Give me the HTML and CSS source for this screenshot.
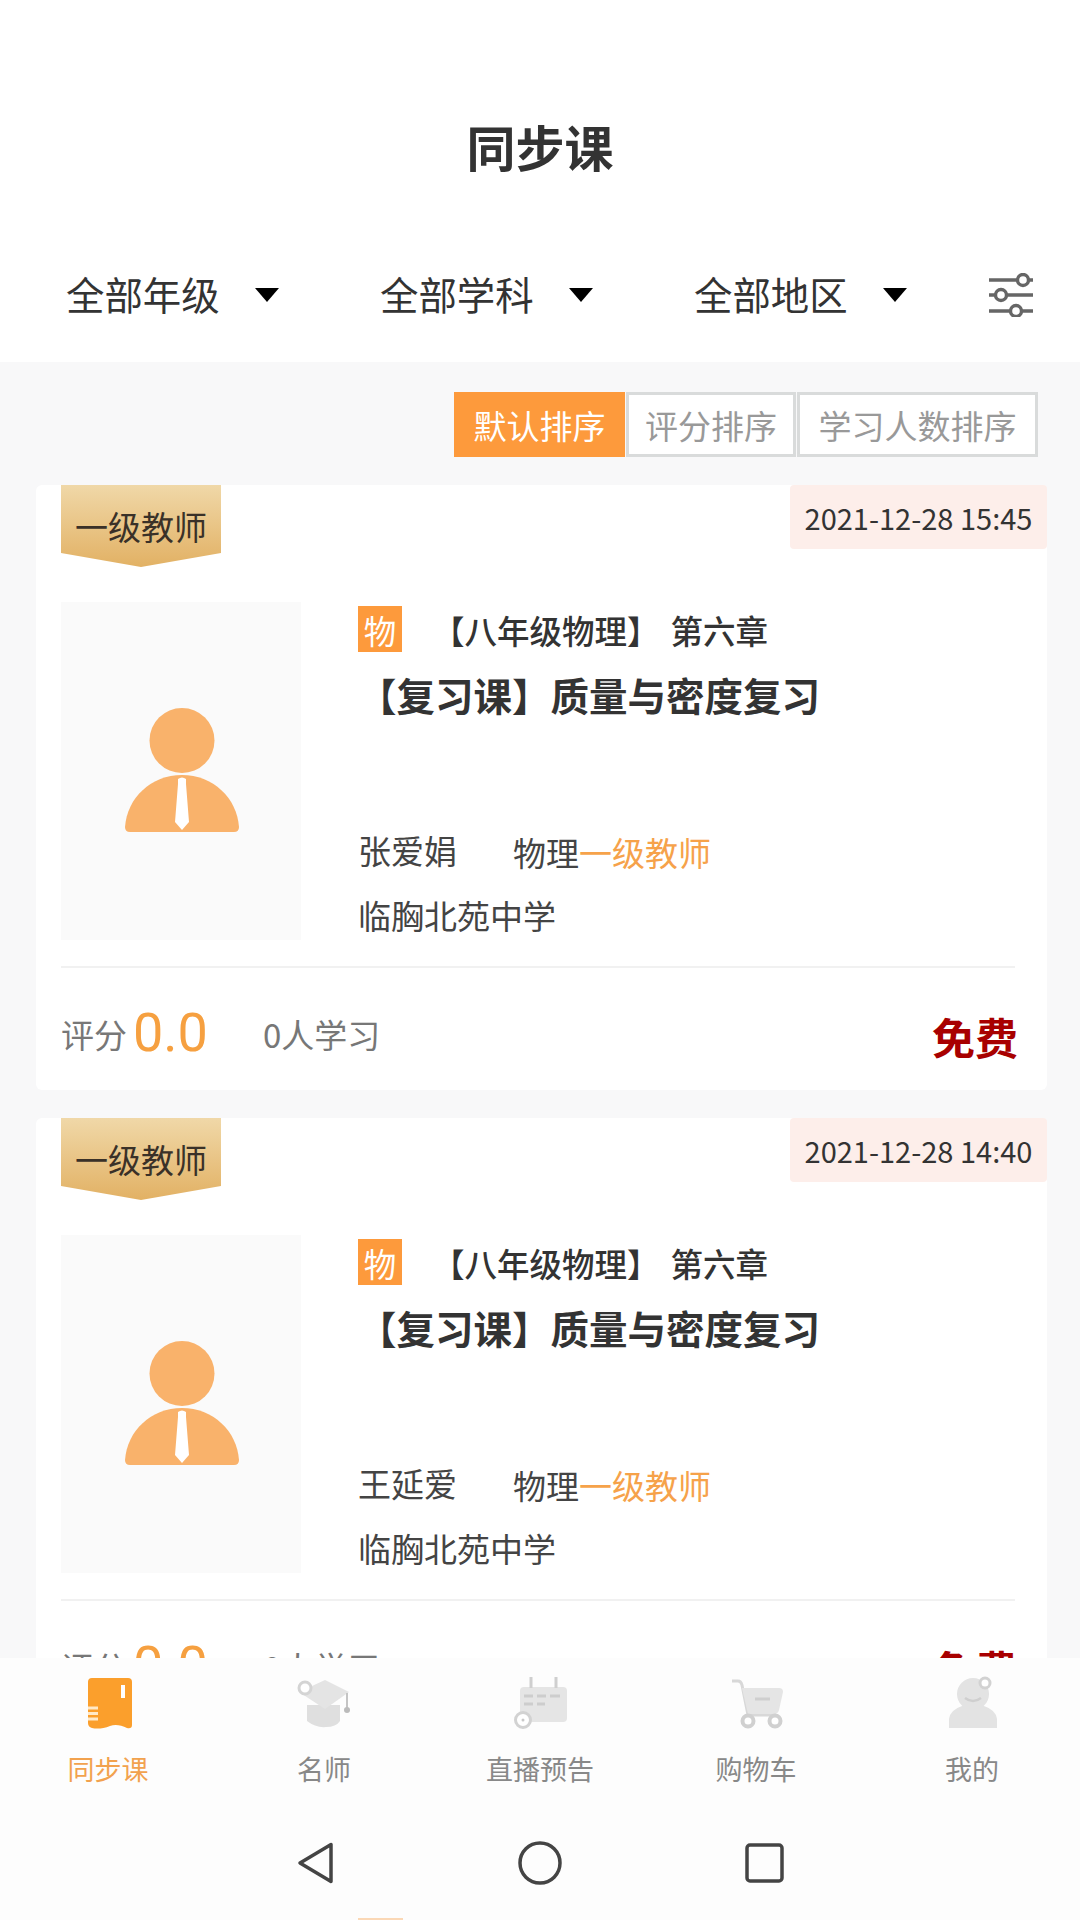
FILE: index.html
```html
<!DOCTYPE html>
<html lang="zh-CN">
<head>
<meta charset="utf-8">
<title>同步课</title>
<link rel="stylesheet" href="styles.css">
</head>
<body>
<div class="page">
  <header class="header">
    <h1 class="title">同步课</h1>
    <div class="filters">
      <div class="filter"><span>全部年级</span><i class="caret"></i></div>
      <div class="filter"><span>全部学科</span><i class="caret"></i></div>
      <div class="filter"><span>全部地区</span><i class="caret"></i></div>
      <svg class="sliders" viewBox="0 0 46 44" width="46" height="44">
        <g fill="none" stroke="#666" stroke-width="3.4">
          <path d="M1 7H29M41 7H45M1 22H7M19 22H45M1 38H22M34 38H45"/>
          <circle cx="35" cy="7" r="5.5"/><circle cx="13" cy="22" r="5.5"/><circle cx="28" cy="38" r="5.5"/>
        </g>
      </svg>
    </div>
  </header>

  <div class="sorts">
    <button class="sort sort-on">默认排序</button>
    <button class="sort sort-mid">评分排序</button>
    <button class="sort sort-wide">学习人数排序</button>
  </div>

  <main class="list">
    <article class="card">
      <div class="card-top">
        <div class="rank">一级教师</div>
        <div class="date">2021-12-28 15:45</div>
      </div>
      <div class="card-body">
        <div class="cover">
          <svg viewBox="0 0 114 124" width="114" height="124">
            <ellipse cx="57" cy="32.500" rx="32.500" ry="32.500" fill="#f9b26b"/>
            <path d="M0 119C2 90 26 67 57 67S112 90 114 119Q114 124 109 124H5Q0 124 0 119Z" fill="#f9b26b"/>
            <path d="M53 71Q57 68 61 71L61 76L64 114L57 122L50 114L53 76Z" fill="#fff"/>
          </svg>
        </div>
        <div class="info">
          <div class="course"><span class="subject">物</span><span class="chapter">【八年级物理】</span><span class="section">第六章</span></div>
          <h2 class="lesson">【复习课】质量与密度复习</h2>
          <div class="teacher"><span class="name">张爱娟</span><span class="post">物理<em class="level">一级教师</em></span></div>
          <div class="teacher school">临胸北苑中学</div>
        </div>
      </div>
      <div class="card-foot">
        <span class="label">评分</span><span class="score">0.0</span><span class="learners">0人学习</span><span class="price">免费</span>
      </div>
    </article>

    <article class="card">
      <div class="card-top">
        <div class="rank">一级教师</div>
        <div class="date">2021-12-28 14:40</div>
      </div>
      <div class="card-body">
        <div class="cover">
          <svg viewBox="0 0 114 124" width="114" height="124">
            <ellipse cx="57" cy="32.500" rx="32.500" ry="32.500" fill="#f9b26b"/>
            <path d="M0 119C2 90 26 67 57 67S112 90 114 119Q114 124 109 124H5Q0 124 0 119Z" fill="#f9b26b"/>
            <path d="M53 71Q57 68 61 71L61 76L64 114L57 122L50 114L53 76Z" fill="#fff"/>
          </svg>
        </div>
        <div class="info">
          <div class="course"><span class="subject">物</span><span class="chapter">【八年级物理】</span><span class="section">第六章</span></div>
          <h2 class="lesson">【复习课】质量与密度复习</h2>
          <div class="teacher"><span class="name">王延爱</span><span class="post">物理<em class="level">一级教师</em></span></div>
          <div class="teacher school">临胸北苑中学</div>
        </div>
      </div>
      <div class="card-foot">
        <span class="label">评分</span><span class="score">0.0</span><span class="learners">0人学习</span><span class="price">免费</span>
      </div>
    </article>
  </main>

  <nav class="tabs">
    <div class="tab tab-on">
      <svg class="tab-icon" viewBox="0 0 60 56" width="60" height="56">
        <path d="M14 3H50Q54 3 54 7V50Q54 54 49 53C43 50 37 49 32 51C25 54 18 54 14 53Q10 52 10 48V7Q10 3 14 3Z" fill="#fb9f2c"/>
        <path d="M45 10V23" stroke="#fff" stroke-width="4"/>
        <path d="M10 33H20M10 38.500H20M10 44H20" stroke="#ffe9c8" stroke-width="3"/>
      </svg>
      <span class="tab-label">同步课</span>
    </div>
    <div class="tab">
      <svg class="tab-icon" viewBox="0 0 60 56" width="60" height="56">
        <path d="M13 30V46Q22 53 32 52Q42 52 46 46V30Z" fill="#dfdfdf"/>
        <path d="M5 17L31 5L55 17L31 34Z" fill="#e4e4e4"/>
        <circle cx="11" cy="13" r="6" fill="#fff" stroke="#d4d4d4" stroke-width="3"/>
        <path d="M53 18V33" stroke="#c4c4c4" stroke-width="2"/>
        <circle cx="53" cy="35" r="3" fill="#bbb"/>
      </svg>
      <span class="tab-label">名师</span>
    </div>
    <div class="tab">
      <svg class="tab-icon" viewBox="0 0 60 56" width="60" height="56">
        <rect x="10" y="12" width="47" height="35" rx="4" fill="#e5e5e5"/>
        <path d="M21 2V13M46 2V13" stroke="#cfcfcf" stroke-width="3"/>
        <path d="M14 21H23M27 21H36M40 21H50M14 29H23M27 29H35" stroke="#cdcdcd" stroke-width="3"/>
        <circle cx="13" cy="45" r="7.500" fill="#fff" stroke="#d2d2d2" stroke-width="3"/>
        <circle cx="13" cy="45" r="1.500" fill="#c8c8c8"/>
      </svg>
      <span class="tab-label">直播预告</span>
    </div>
    <div class="tab">
      <svg class="tab-icon" viewBox="0 0 60 56" width="60" height="56">
        <path d="M6 6H12Q15 6 16 10L22 40H50" fill="none" stroke="#d8d8d8" stroke-width="3"/>
        <path d="M16 13H53Q57 13 57 17L53 35Q52 39 48 39H22Z" fill="#e5e5e5"/>
        <path d="M29 24H44" stroke="#cfcfcf" stroke-width="3"/>
        <circle cx="22" cy="46" r="5.500" fill="#fff" stroke="#d0d0d0" stroke-width="4"/>
        <circle cx="49" cy="46" r="5.500" fill="#fff" stroke="#d0d0d0" stroke-width="4"/>
      </svg>
      <span class="tab-label">购物车</span>
    </div>
    <div class="tab">
      <svg class="tab-icon" viewBox="0 0 60 56" width="60" height="56">
        <path d="M7 53V44Q8 35 20 31H42Q54 35 55 44V53Z" fill="#e3e3e3"/>
        <circle cx="31" cy="19" r="16" fill="#e3e3e3"/>
        <path d="M23 23Q31 29 39 23" fill="none" stroke="#cfcfcf" stroke-width="2.500"/>
        <circle cx="43" cy="8" r="5" fill="#fff" stroke="#d2d2d2" stroke-width="3"/>
      </svg>
      <span class="tab-label">我的</span>
    </div>
  </nav>

  <footer class="system">
    <svg viewBox="0 0 40 44" width="40" height="44">
      <path d="M35 3.500V40.500L4 22Z" fill="none" stroke="#444" stroke-width="3.500" stroke-linejoin="round"/>
    </svg>
    <svg viewBox="0 0 44 44" width="44" height="44">
      <circle cx="22" cy="22" r="20" fill="none" stroke="#444" stroke-width="3.500"/>
    </svg>
    <svg viewBox="0 0 40 44" width="40" height="44">
      <rect x="3" y="4" width="35" height="36" rx="3" fill="none" stroke="#444" stroke-width="3.500"/>
    </svg>
    <i class="peek"></i>
  </footer>
</div>
</body>
</html>
```

FILE: styles.css
```css
* { box-sizing: border-box; }
html, body { margin: 0; padding: 0; }
body {
  font-family: "Noto Sans CJK SC", "Noto Sans", sans-serif;
  color: #333;
  background: #f8f8f9;
}
.page {
  width: 1080px;
  height: 1920px;
  display: flex;
  flex-direction: column;
  overflow: hidden;
}

/* header */
.header { background: #fff; height: 362px; flex: none; }
.title {
  margin: 0;
  height: 228px;
  padding-top: 62px;
  display: flex;
  align-items: center;
  justify-content: center;
  font-size: 49px;
  font-weight: 700;
  color: #333;
}
.filters {
  height: 134px;
  padding-left: 66px;
  display: flex;
  align-items: center;
}
.filter {
  width: 314px;
  display: flex;
  align-items: center;
  gap: 35px;
  font-size: 38.4px;
  color: #333;
}
.filter span { margin-bottom: 4px; }
.caret {
  width: 0;
  height: 0;
  border-left: 12px solid transparent;
  border-right: 12px solid transparent;
  border-top: 14px solid #000;
}
.sliders { margin-left: -20px; }

/* sort */
.sorts {
  flex: none;
  height: 123px;
  padding: 30px 42px 0 0;
  display: flex;
  justify-content: flex-end;
  align-items: flex-start;
  gap: 1px;
}
.sort {
  height: 65px;
  padding: 0;
  font: inherit;
  font-size: 33px;
  color: #999;
  background: #fff;
  border: 3px solid #d9dbdb;
}
.sort-on { width: 171px; color: #fff; background: #fd9a3c; border-color: #fd9a3c; }
.sort-mid { width: 170px; }
.sort-wide { width: 241px; }

/* cards */
.list {
  flex: 1;
  min-height: 0;
  padding: 0 33px 0 36px;
  display: flex;
  flex-direction: column;
  gap: 28px;
}
.card {
  flex: none;
  height: 605px;
  background: #fff;
  border-radius: 6px;
  padding: 0 32px 0 25px;
}
.card-top {
  height: 117px;
  margin-right: -32px;
  display: flex;
  justify-content: space-between;
  align-items: flex-start;
}
.rank {
  width: 160px;
  height: 82px;
  display: flex;
  align-items: center;
  justify-content: center;
  font-size: 33px;
  color: #3a3128;
  background: linear-gradient(#f0d8a8, #e2b164);
  clip-path: polygon(0 0, 100% 0, 100% 83%, 50% 100%, 0 83%);
}
.date {
  width: 257px;
  height: 64px;
  display: flex;
  align-items: center;
  justify-content: center;
  font-size: 29px;
  color: #333;
  background: #fdeeea;
  border-radius: 4px;
}
.card-body { height: 341px; display: flex; gap: 57px; }
.cover {
  width: 240px;
  height: 338px;
  background: #fafafa;
  display: flex;
  justify-content: center;
  padding: 106px 0 0 2px;
}
.info {
  flex: 1;
  display: flex;
  flex-direction: column;
  padding: 4px 0 3px;
}
.course {
  height: 46px;
  display: flex;
  align-items: center;
  font-size: 32.5px;
  font-weight: 500;
}
.subject {
  width: 44px;
  height: 46px;
  display: flex;
  align-items: center;
  justify-content: center;
  color: #fff;
  background: #fd9a3c;
  font-weight: 400;
}
.chapter { margin-left: 30px; }
.section { margin-left: 11px; }
.lesson {
  margin: 15px 0 0;
  font-size: 38.5px;
  line-height: 54px;
  font-weight: 700;
  color: #333;
}
.teacher {
  height: 50px;
  display: flex;
  align-items: center;
  gap: 56px;
  font-size: 33px;
  line-height: 50px;
  color: #444;
  margin-top: auto;
}
.post { margin-top: 4px; }
.school { margin-top: 15px; }
.level { font-style: normal; color: #f6a24a; }
.card-foot {
  margin-top: 23px;
  height: 124px;
  padding: 10px 0 0 0;
  border-top: 2px solid #f1f1f1;
  display: flex;
  align-items: center;
  font-size: 33px;
  color: #777;
}
.score {
  margin-left: 6px;
  margin-bottom: 3px;
  font-family: Roboto, sans-serif;
  font-size: 54px;
  color: #f6a040;
}
.learners { margin-left: 55px; }
.price {
  margin-left: auto;
  margin-top: 4px;
  margin-right: -3px;
  font-size: 43px;
  font-weight: 700;
  color: #a80000;
}

/* tabs */
.tabs {
  flex: none;
  height: 144px;
  background: #fdfdfd;
  display: grid;
  grid-template-columns: repeat(5, 216px);
}
.tab {
  display: flex;
  flex-direction: column;
  align-items: center;
  padding-top: 17px;
}
.tab-icon { flex: none; }
.tab-label {
  margin-top: 18px;
  font-size: 27px;
  line-height: 40px;
  color: #888;
}
.tab-on .tab-label { color: #f2a24e; }

/* system bar */
.system {
  flex: none;
  height: 118px;
  background: #fdfdfd;
  position: relative;
  display: flex;
  justify-content: center;
  align-items: flex-start;
  gap: 182px;
  padding-top: 39px;
}
.peek {
  position: absolute;
  left: 358px;
  bottom: 0;
  width: 45px;
  height: 2px;
  background: #fbd8b6;
}
```
